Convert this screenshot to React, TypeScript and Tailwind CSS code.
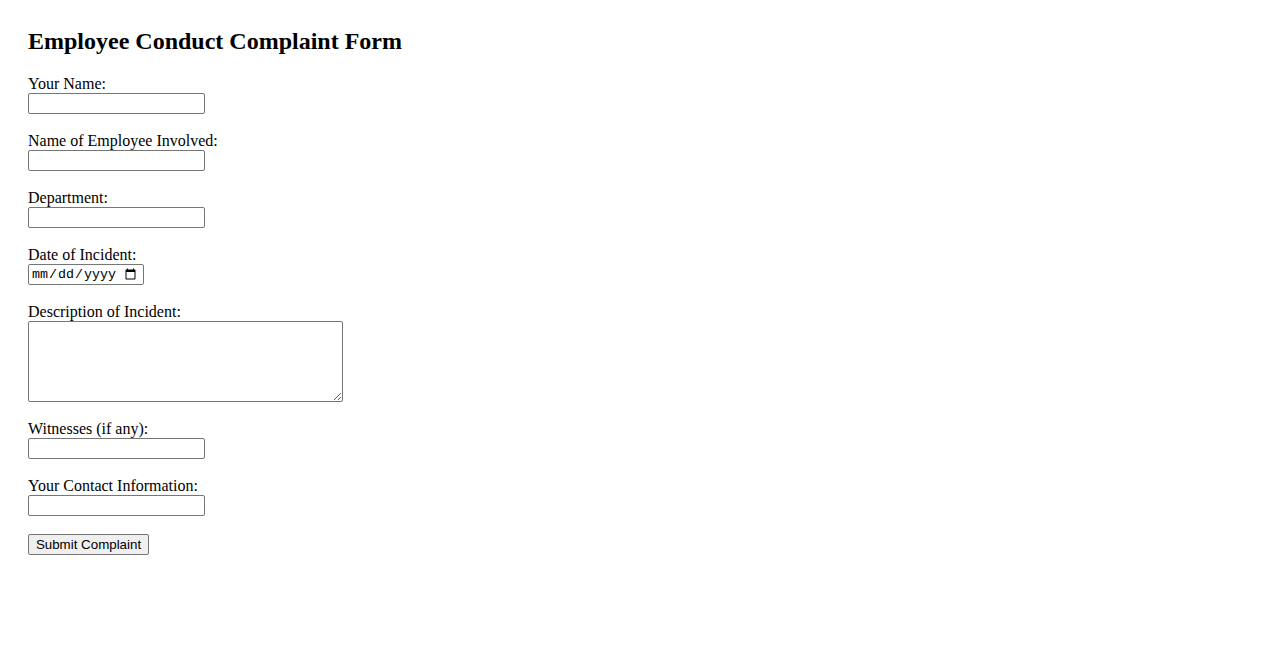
import React from "react";

const fieldClass =
  "block w-[177px] h-[21px] border border-[#767676] rounded-[2px] bg-white px-[2px] text-[13.33px] font-['Liberation_Sans',Arial,sans-serif]";

const TextField = ({ label }: { label: string }) => (
  <div className="flex flex-col mb-[17px]">
    <label className="block leading-[19px]">{label}</label>
    <input type="text" className={fieldClass} />
  </div>
);

const App = () => {
  return (
    <div className="min-h-[650px] bg-white text-black font-['Liberation_Serif','Times_New_Roman',serif] text-base pl-[28px] pt-[28px]">
      <h2 className="text-[24px] font-bold leading-[27px] mb-[19px]">
        Employee Conduct Complaint Form
      </h2>
      <form className="flex flex-col items-start" onSubmit={(e) => e.preventDefault()}>
        <TextField label="Your Name:" />
        <TextField label="Name of Employee Involved:" />
        <TextField label="Department:" />

        <div className="flex flex-col mb-[17px]">
          <label className="block leading-[19px]">Date of Incident:</label>
          <input
            type="date"
            className="block w-[116px] h-[21px] border border-[#767676] rounded-[2px] bg-white pl-[2px] pr-[4px] text-[13.33px] font-['Liberation_Mono','DejaVu_Sans_Mono',monospace]"
          />
        </div>

        <div className="flex flex-col mb-[17px]">
          <label className="block leading-[19px]">Description of Incident:</label>
          <textarea className="block w-[315px] h-[81px] border border-[#767676] rounded-[2px] bg-white p-[2px] text-[13.33px] font-['Liberation_Mono',monospace]" />
        </div>

        <TextField label="Witnesses (if any):" />
        <TextField label="Your Contact Information:" />

        <button
          type="submit"
          className="block mt-[1px] w-[121px] h-[21px] border border-[#767676] rounded-[2px] bg-[#efefef] text-[13.33px] leading-[19px] text-black font-['Liberation_Sans',Arial,sans-serif]"
        >
          Submit Complaint
        </button>
      </form>
    </div>
  );
};

export default App;
